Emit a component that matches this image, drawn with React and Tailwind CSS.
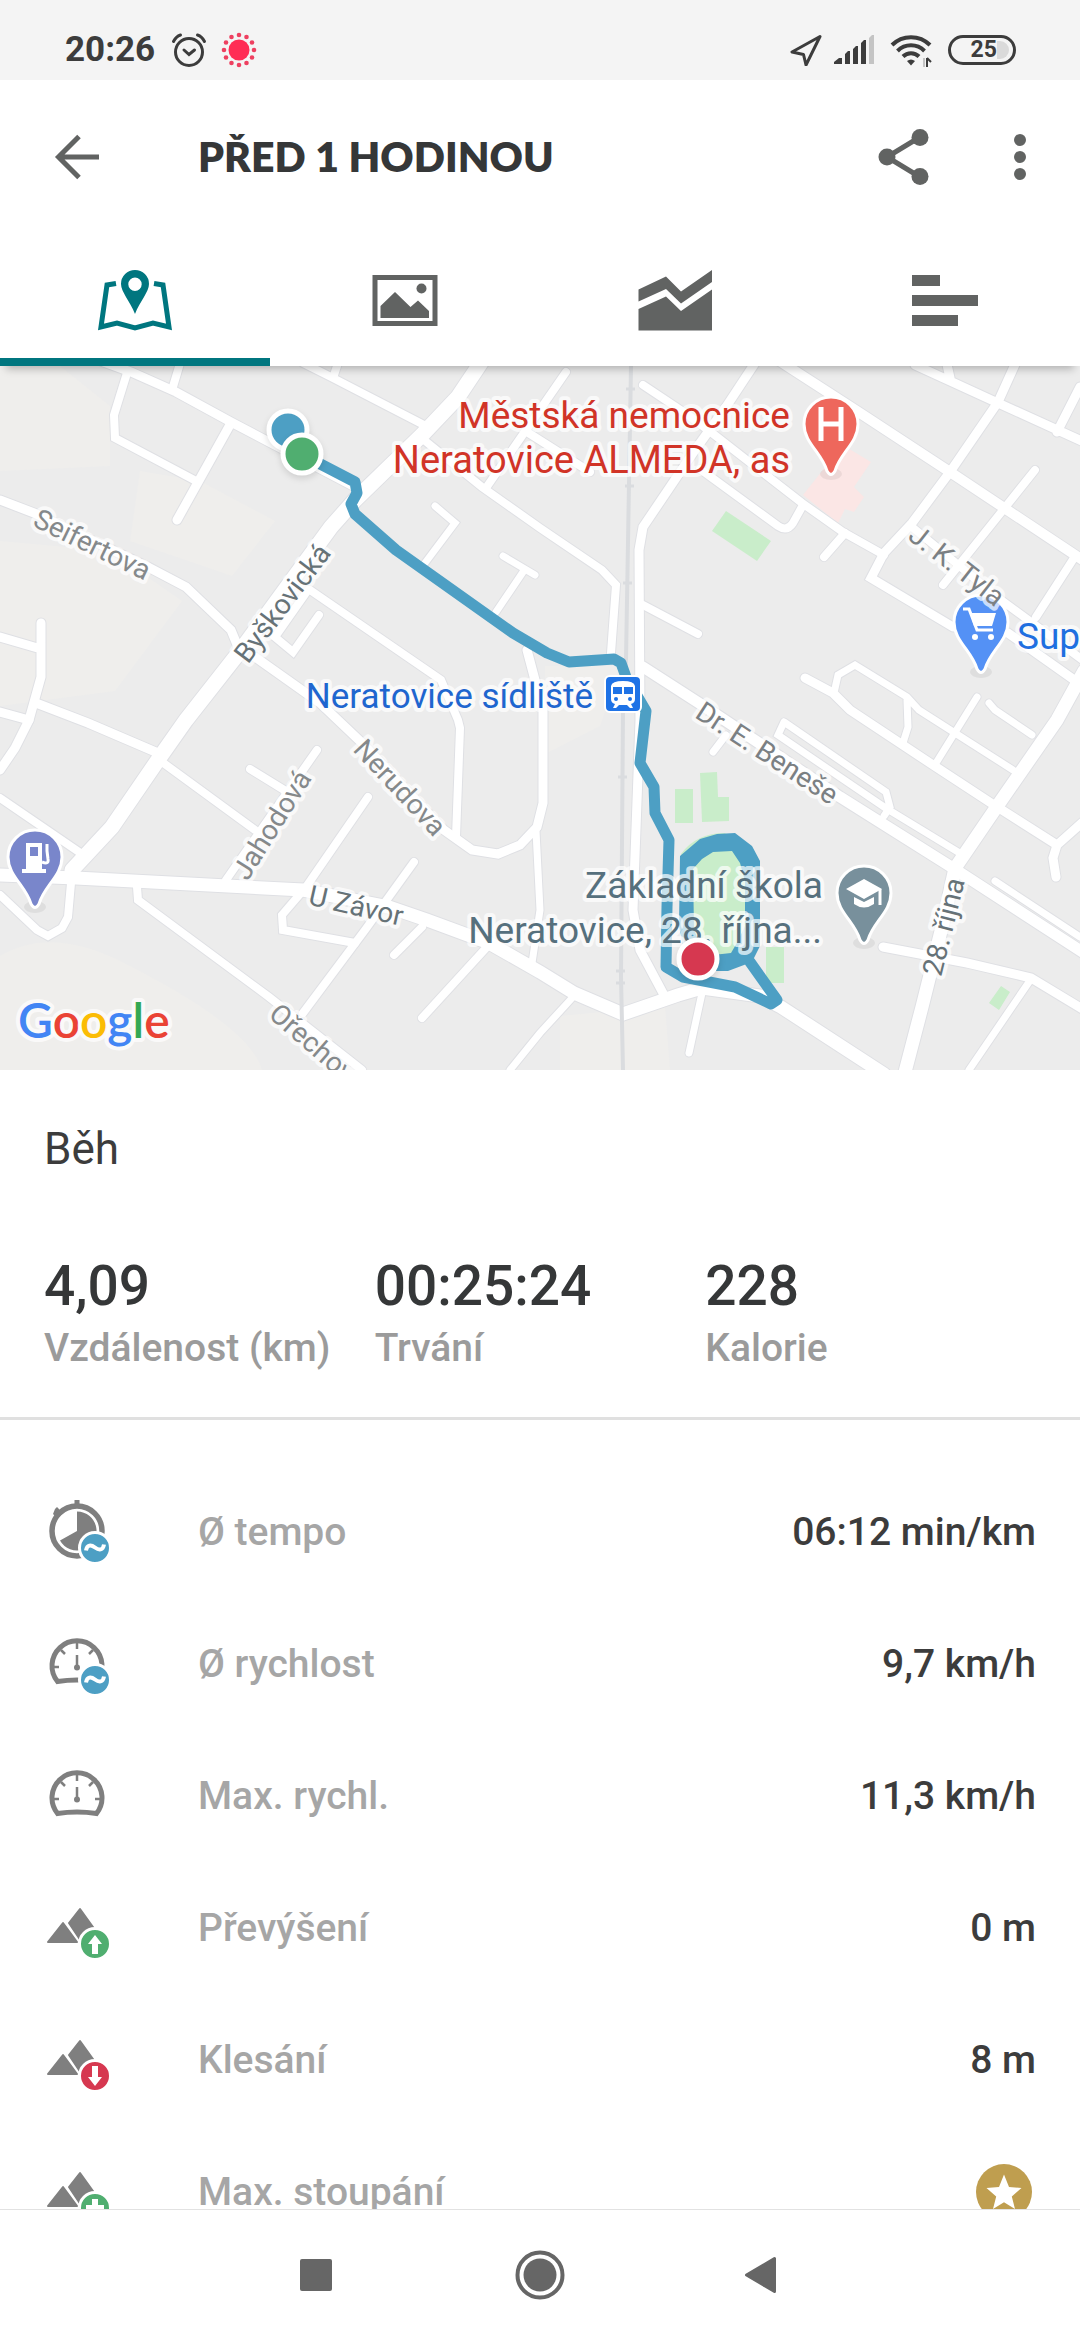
import React, { useState } from "react";

/* ---------- status bar ---------- */

const virusDots = Array.from({ length: 12 }, (_, i) => {
    const a = (i * Math.PI) / 6;
    return [18 + 15 * Math.cos(a), 18 + 15 * Math.sin(a)];
});

function StatusBar() {
    return (
        <div className="h-20 shrink-0 bg-[#f4f4f4] flex items-center justify-between pl-[65px] pr-16 pt-5 text-[#3c3c3c]">
            <div className="flex items-center">
                <span className="text-[35px] leading-[36px] font-bold">20:26</span>
                <svg className="w-9 h-9 ml-4" viewBox="0 0 36 36" fill="none" stroke="currentColor" strokeWidth="3" strokeLinecap="round">
                    <circle cx="18" cy="20" r="13.5" />
                    <path d="M13 18l5 4.500 5.500-4.500M2.500 9.500C4 6.500 6.500 4 9.500 3M33.500 9.500C32 6.500 29.500 4 26.500 3" />
                </svg>
                <svg className="w-9 h-9 ml-[14px]" viewBox="0 0 36 36">
                    <circle cx="18" cy="18" r="10.500" fill="#ff2d55" />
                    {virusDots.map(([x, y], i) => (
                        <circle key={i} cx={x} cy={y} r="2.300" fill="#ee4060" />
                    ))}
                </svg>
            </div>
            <div className="flex items-center">
                <svg className="w-8 h-8" viewBox="0 0 32 32" fill="none" stroke="currentColor" strokeWidth="3" strokeLinejoin="round">
                    <path d="M30 2.500L2 18l11.500 2.500L16 31z" />
                </svg>
                <svg className="w-[42px] h-8 ml-3" viewBox="0 0 42 32" fill="currentColor">
                    <path d="M0 30v-2l5-4h3v6zM11 30V20l3-3h2v13zM19 30V15l3-3h2v18zM27 30V9l3-3h2v24z" />
                    <path d="M35 30V4l3-3h2v29z" fill="#c4c4c4" />
                </svg>
                <svg className="w-11 h-9 ml-[14px]" viewBox="0 0 44 36" fill="none" stroke="currentColor" strokeWidth="4">
                    <path d="M2 13a27 27 0 0 1 38 0M7.500 19a19 19 0 0 1 27 0M13 24.500a11.500 11.500 0 0 1 16 0" />
                    <path d="M17 29q4-3 8 0l-4 4.500z" fill="currentColor" stroke="none" />
                    <path d="M37 26v9M41 30l-4-4" strokeWidth="2" />
                    <path d="M34 35v-9" strokeWidth="2" stroke="#c4c4c4" />
                </svg>
                <div className="ml-[14px] w-[68px] h-[30px] rounded-full border-[3px] border-[#3c3c3c] flex items-center justify-end pr-1">
                    <span className="text-[23px] leading-[24px] font-bold">25</span>
                    <span className="w-3 h-[18px] rounded-r-full bg-[#dadada]" />
                </div>
            </div>
        </div>
    );
}

/* ---------- header and tabs ---------- */

function Header() {
    return (
        <header className="h-[154px] shrink-0 flex items-center pl-[54px] pr-[44px] text-[#616362]">
            <button type="button" aria-label="Zpět" className="w-12 h-12">
                <svg viewBox="0 0 48 48" fill="none" stroke="currentColor" strokeWidth="5">
                    <path d="M45 24H6M25 3.500L4.500 24 25 44.500" />
                </svg>
            </button>
            <h1 className="flex-1 ml-24 text-[41px] leading-[48px] font-extrabold text-[#353738] font-['Lato',sans-serif]">
                PŘED 1 HODINOU
            </h1>
            <button type="button" aria-label="Sdílet" className="w-14 h-14">
                <svg viewBox="0 0 56 56" fill="currentColor">
                    <path d="M44 8L11 28l33 20" fill="none" stroke="currentColor" strokeWidth="5" />
                    <circle cx="44" cy="8.500" r="8.500" />
                    <circle cx="11" cy="28" r="8.500" />
                    <circle cx="44" cy="47.500" r="8.500" />
                </svg>
            </button>
            <button type="button" aria-label="Další možnosti" className="w-8 h-14 ml-[72px]">
                <svg viewBox="0 0 32 56" fill="currentColor">
                    <circle cx="16" cy="11" r="6" />
                    <circle cx="16" cy="28" r="6" />
                    <circle cx="16" cy="45" r="6" />
                </svg>
            </button>
        </header>
    );
}

const tabs = [
    {
        id: "map",
        label: "Mapa",
        icon: (
            <>
                <path
                    d="M19 14.500L10 16 4 58l16-4 18 5 18-5 16 4L66 16 57 14.500"
                    fill="none"
                    stroke="currentColor"
                    strokeWidth="5"
                />
                <path
                    fillRule="evenodd"
                    d="M38 1a14 14 0 0 1 14 14c0 8-9 17-14 30-5-13-14-22-14-30A14 14 0 0 1 38 1zm0 7.500a6.700 6.700 0 1 0 0 13.400 6.700 6.700 0 0 0 0-13.400z"
                />
            </>
        ),
    },
    {
        id: "photos",
        label: "Fotky",
        icon: (
            <>
                <path d="M8 8.500h60v46H8z" fill="none" stroke="currentColor" strokeWidth="5" />
                <path d="M13.500 49V37L28 23l15.500 15 7.500-6.500L62 42v7z" />
                <circle cx="54.500" cy="19.500" r="5" />
            </>
        ),
    },
    {
        id: "charts",
        label: "Grafy",
        icon: (
            <path d="M1.500 20.500L29 7.500 44 22.500 75 1v12L44 34.500 29 20 1.500 32.500zM1.500 40L29 27.500 44 42 75 20.500V61.500H1.500z" />
        ),
    },
    {
        id: "laps",
        label: "Kola",
        icon: <path d="M5 6h28v11H5zM5 26h66v11H5zM5 46h46v11H5z" />,
    },
];

function Tabs() {
    const [active, setActive] = useState("map");
    return (
        <div role="tablist" className="relative z-10 h-[132px] shrink-0 grid grid-cols-4 bg-white shadow-[0_9px_8px_-6px_rgba(0,0,0,0.25)]">
            {tabs.map((tab) => (
                <button
                    key={tab.id}
                    type="button"
                    role="tab"
                    aria-label={tab.label}
                    aria-selected={active === tab.id}
                    onClick={() => setActive(tab.id)}
                    className={
                        active === tab.id
                            ? "flex justify-center pt-[35px] border-b-8 border-[#00767f] text-[#00767f]"
                            : "flex justify-center pt-[35px] border-b-8 border-transparent text-[#616362]"
                    }
                >
                    <svg className="w-[76px] h-[62px]" viewBox="0 0 76 62" fill="currentColor">
                        {tab.icon}
                    </svg>
                </button>
            ))}
        </div>
    );
}

/* ---------- map ---------- */

// [width, path]
const roads = [
    [8, "M127 7L114 49 115 72 198 116"],
    [9, "M231 57L177 154"],
    [8, "M181-6L172 24"],
    [9, "M98-6L131 6 176 26 231 56 269 76 355 121"],
    [8, "M303-3L331 11 424 59M339-6L334 9"],
    [9, "M0 134L34 147 148 201 186 221 231 264 238 281"],
    [9, "M41 257V311L29 354 15 382 0 404M0 271L41 283"],
    [9, "M36 337L88 357 158 387M0 346L29 354"],
    [8, "M310 224L441 314 458 354 460 362 456 471"],
    [8, "M308 224L275 271 293 286 319 249"],
    [9, "M255 291L320 337 341 357 362 377 444 464 472 484 498 488 520 479 537 461 543 437V344L527 284"],
    [7, "M536 465L540 544 532 597"],
    [8, "M0 432L79 486"],
    [8, "M162 396L255 464M317 384L226 514M250 403L289 427"],
    [8, "M368 431L306 521 282 549 283 564 355 577"],
    [8, "M414 496L365 564 303 647M422 561L394 589M486 582L422 652"],
    [8, "M137 521L138 534 269 631 362 704"],
    [8, "M71 517L68 551 62 562 48 570 37 564 0 529"],
    [7, "M510 704L540 667 573 631"],
    [8, "M424 74L482 121 540 162 602 204 616 219 611 287"],
    [8, "M566 6L486 122M527 66L590 106"],
    [7, "M435 140L455 157 425 197M503 190L535 209M523 206L496 246"],
    [9, "M757-6L726 41 695 84 643 161 639 184 640 354 633 544 640 584 664 629"],
    [8, "M643 19L688 49 712 67 802 137 843 166 884 189"],
    [8, "M700 103L778 160Q787 166 793 157L803 139M845 167L824 191"],
    [10, "M778-6L860 47 950 106 1084 195"],
    [9, "M915-1L998 37 1084 76M946-6L950 12M1080 21L1057 66"],
    [9, "M1017-6L998 36 950 106 912 157 884 187 871 212 953 261 1008 267 1080 318"],
    [8, "M1035 104L943 219M1074 192L1036 251M912 161L1001 234 1084 295"],
    [8, "M643 239L698 268"],
    [7, "M784 356L778 369 884 441 958 486M784 356L886 426 890 441 884 450"],
    [11, "M643 301L702 339 753 373 840 431 953 502 1084 587"],
    [9, "M805 312L833 327 850 344 933 399 991 437 1057 479 1053 492 1056 511M1084 455L1057 479"],
    [7, "M834 327L838 309 855 299 907 331 919 344 1013 404M907 334L908 361 903 377"],
    [7, "M977 331L936 397M989 337L995 344 1032 369M726 369L713 386"],
    [9, "M883 581L967 597 1031 612 1084 644"],
    [7, "M1029 616L969 704M995 515L1080 571M702 627L689 687"],
    [13, "M1084 305L1057 354 998 439 955 502 943 557 922 641 905 706"],
    [13, "M0 509L76 512 303 524 389 541 427 554 489 577 540 606 574 627 623 648 678 629 702 622 760 630 781 641 884 708"],
    [15, "M484-8L458 31 422 69 355 134 331 161 241 284 186 354 160 391 112 461 72 504"],
];

function Pin({ x, y, fill, children }) {
    return (
        <g transform={`translate(${x} ${y})`}>
            <ellipse cx="0" cy="50" rx="11" ry="6" fill="#000" opacity="0.06" />
            <path
                d="M0-27A27 27 0 0 1 27 0C27 19 9 29 4 47Q0 54-4 47C-9 29-27 19-27 0A27 27 0 0 1 0-27z"
                fill={fill}
                stroke="#fff"
                strokeWidth="3"
            />
            {children}
        </g>
    );
}

function Marker({ x, y, fill }) {
    return <circle className="drop-shadow-md" cx={x} cy={y} r="19" fill={fill} stroke="#fff" strokeWidth="5" />;
}

const streets = [
    { name: "Seifertova", x: 88, y: 187, angle: 26, fill: "#85898b" },
    { name: "Byškovická", x: 290, y: 243, angle: -53, fill: "#667277" },
    { name: "Jahodová", x: 280, y: 464, angle: -58, fill: "#85898b" },
    { name: "Nerudova", x: 393, y: 428, angle: 47, fill: "#85898b" },
    { name: "U Závor", x: 354, y: 549, angle: 13, fill: "#667277" },
    { name: "Ořechov", x: 306, y: 684, angle: 41, fill: "#85898b" },
    { name: "J. K. Tyla", x: 951, y: 207, angle: 38, fill: "#7b8083" },
    { name: "Dr. E. Beneše", x: 762, y: 395, angle: 33, fill: "#7b8083" },
    { name: "28. října", x: 953, y: 563, angle: -76, fill: "#667277" },
];

function RouteMap() {
    return (
        <svg
            className="block w-full h-[704px] shrink-0 bg-[#ececec] font-['Roboto',sans-serif]"
            viewBox="0 0 1080 704"
            preserveAspectRatio="xMidYMid slice"
            role="img"
            aria-label="Mapa trasy"
        >
            <g fill="#efeeec">
                <path d="M0 0H60L110 40V100L0 105zM140 105L200 115 275 155 232 210 130 175zM0 175L110 185 182 235 115 325 0 340z" />
                <path d="M0 590Q50 560 120 595 250 660 262 704H0zM545 300L620 300 600 360 545 388zM560 650L665 640 670 704H560z" />
            </g>
            <path
                d="M846 81L871 96 854 121 864 131 854 146 845 143 838 157 803 129 830 95z"
                fill="#fbe6e5"
            />
            <g fill="#c9edca">
                <path d="M726 145L771 175 757 195 712 165zM675 423h18v34h-18zM700 407L717 406 718 431H729V455L702 456z" />
                <path d="M766 581h18v36h-18zM1001 620L1010 626 999 644 989 637z" />
                <path d="M681 488Q696 467 725 467L755 500V570Q748 600 722 600 690 598 684 570z" />
            </g>
            <g fill="none" strokeLinecap="round">
                {roads.map(([w, d]) => (
                    <path key={d} d={d} stroke="#dfe0e4" strokeWidth={w + 2} />
                ))}
                {roads.map(([w, d]) => (
                    <path key={d} d={d} stroke="#fff" strokeWidth={w} />
                ))}
            </g>

            {/* railway */}
            <path d="M631 0L626 294 623 344 621 611 623 704" fill="none" stroke="#dadcdf" strokeWidth="4" />
            <path
                d="M626 23h9M625 120h9M623 217h9M618 411h9M617 507h9M616 605h9M616 617h9"
                stroke="#dadcdf"
                strokeWidth="3"
            />

            {/* recorded run, the stadium laps are one filled ring */}
            <path
                fill="none"
                stroke="#4d9fc4"
                strokeWidth="11"
                strokeLinejoin="round"
                strokeLinecap="round"
                d="M303 89L355 116 357 127 351 138 355 148 396 184 513 267 547 287 569 296 614 293 621 297 626 311 646 345 640 397 654 421 655 447 669 474 667 541 666 601 683 611 735 621 771 638 777 634 750 596"
            />
            <path
                fill="#4d9fc4"
                fillRule="evenodd"
                d="M680 490L700 473 717 468 735 467 752 480 760 495V580L752 596 728 605 702 605 684 585 679 560zM693 503L702 493 713 486 732 485 740 497 745 515V560L738 575 731 587 713 589 700 580 694 563z"
            />

            <Pin x={831} y={58} fill="#ee675c">
                <path d="M-10-17V17M10-17V17M-10 0H10" stroke="#fff" strokeWidth="5" />
            </Pin>
            <Pin x={981} y={256} fill="#5491f5">
                <path d="M-18-13h6l8 21H12" fill="none" stroke="#fff" strokeWidth="3" />
                <path d="M-11-9H15L11 4H-7z" fill="#fff" />
                <circle cx="-6" cy="15" r="3" fill="#fff" />
                <circle cx="10" cy="15" r="3" fill="#fff" />
            </Pin>
            <Pin x={35} y={491} fill="#7986cb">
                <path
                    fillRule="evenodd"
                    d="M-9-14H7V12h4v4h-24v-4h4zm4 4v9h8v-9z"
                    fill="#fff"
                />
                <path d="M7 5q7 3 6-3l-1-8v-7" fill="none" stroke="#fff" strokeWidth="3" />
            </Pin>
            <Pin x={864} y={527} fill="#78909c">
                <path d="M0-14L18-4 0 6-18-4zM-10 4v7q10 7 20 0V4L0 9z" fill="#fff" />
                <path d="M16-4V12" stroke="#fff" strokeWidth="3" />
            </Pin>
            <g transform="translate(605 310)">
                <rect width="36" height="36" rx="5" fill="#1f73e6" stroke="#fff" strokeWidth="2" />
                <path d="M6 10Q7 5 18 5t12 5v13q0 4-4 5l2 4h-3l-3-3h-8l-3 3H8l2-4q-4-1-4-5z" fill="#fff" />
                <path d="M8 11h9v7H8zM19 11h9v7h-9z" fill="#1f73e6" />
                <circle cx="11" cy="23" r="2" fill="#1f73e6" />
                <circle cx="25" cy="23" r="2" fill="#1f73e6" />
            </g>

            <g paintOrder="stroke" stroke="#fff" strokeOpacity="0.7" strokeWidth="8" strokeLinejoin="round">
                {streets.map((s) => (
                    <text
                        key={s.name}
                        transform={`translate(${s.x} ${s.y}) rotate(${s.angle})`}
                        textAnchor="middle"
                        fontSize="28"
                        fill={s.fill}
                    >
                        {s.name}
                    </text>
                ))}
                <g fontSize="37">
                    <text x="790" y="62" textAnchor="end" fill="#d13427">Městská nemocnice</text>
                    <text x="790" y="107" textAnchor="end" fontSize="38" fill="#d13427">Neratovice ALMEDA, as</text>
                    <text x="593" y="342" textAnchor="end" fontSize="35" fill="#1f66cf">Neratovice sídliště</text>
                    <text x="823" y="532" textAnchor="end" fill="#56707d">Základní škola</text>
                    <text x="822" y="577" textAnchor="end" fill="#56707d">Neratovice, 28. října...</text>
                    <text x="1017" y="283" fill="#1f6fe0">Sup</text>
                </g>
            </g>

            <Marker x={288} y={64} fill="#4d9fc4" />
            <Marker x={302} y={88} fill="#50ae70" />
            <Marker x={698} y={593} fill="#d63850" />

            <text
                className="font-['Lato',sans-serif] font-semibold"
                x="18"
                y="672"
                fontSize="48"
                paintOrder="stroke"
                stroke="#fff"
                strokeOpacity="0.7"
                strokeWidth="8"
                strokeLinejoin="round"
            >
                <tspan fill="#4285f4">G</tspan>
                <tspan fill="#ea4335">o</tspan>
                <tspan fill="#fbbc05">o</tspan>
                <tspan fill="#4285f4">g</tspan>
                <tspan fill="#34a853">l</tspan>
                <tspan fill="#ea4335">e</tspan>
            </text>
        </svg>
    );
}

/* ---------- workout summary ---------- */

const summary = [
    { value: "4,09", label: "Vzdálenost (km)" },
    { value: "00:25:24", label: "Trvání" },
    { value: "228", label: "Kalorie" },
];

function Summary() {
    return (
        <section className="px-11 pt-[53px] pb-[43px] border-b-[3px] border-[#e0e0e0] shrink-0">
            <h2 className="text-[44px] leading-[52px] text-[#3c3c3c]">Běh</h2>
            <dl className="mt-[79px] grid grid-cols-3">
                {summary.map((item) => (
                    <div key={item.label} className="flex flex-col-reverse gap-1">
                        <dt className="text-[39px] leading-[52px] font-medium text-[#9b9b9b] whitespace-nowrap">{item.label}</dt>
                        <dd className="text-[55px] leading-[64px] font-medium text-[#353738]">{item.value}</dd>
                    </div>
                ))}
            </dl>
        </section>
    );
}

/* ---------- detail rows ---------- */

function Badge({ fill, children }) {
    return (
        <>
            <circle cx="50" cy="48" r="15.500" fill={fill} stroke="#fff" strokeWidth="3" />
            {children}
        </>
    );
}

const Wave = () => (
    <Badge fill="#4d9fc4">
        <path d="M41 50.500c1-6 5-6 9-3s8 3 9-3" fill="none" stroke="#fff" strokeWidth="4" />
    </Badge>
);

const Stopwatch = () => (
    <>
        <circle cx="32" cy="31" r="25" fill="none" stroke="currentColor" strokeWidth="5.500" />
        <path d="M29.500 0h5v6h-5zM10 9l2-2 3 3 2 4-6 5-1-3-2-2z" />
        <path d="M32 31V11.500a19.500 19.500 0 1 1-17 29z" />
    </>
);

const Gauge = () => (
    <>
        <path
            d="M12.500 49.500A25 25 0 1 1 51.500 49.500Q32 46.500 12.500 49.500z"
            fill="none"
            stroke="currentColor"
            strokeWidth="5"
        />
        <path
            d="M32 10v7M32 23v12M9 35h5M50 35h5M16 18l4 4M48 18l-4 4"
            fill="none"
            stroke="currentColor"
            strokeWidth="2.500"
        />
        <circle cx="32" cy="35.500" r="3" />
    </>
);

const Mountains = () => (
    <path
        d="M3 46L18 27 32 46zM24 27L35 13 58 45 36 45z"
        stroke="currentColor"
        strokeWidth="2"
        strokeLinejoin="round"
    />
);

const rows = [
    { label: "Ø tempo", value: "06:12 min/km", icon: <><Stopwatch /><Wave /></> },
    { label: "Ø rychlost", value: "9,7 km/h", icon: <><Gauge /><Wave /></> },
    { label: "Max. rychl.", value: "11,3 km/h", icon: <Gauge /> },
    {
        label: "Převýšení",
        value: "0 m",
        icon: (
            <>
                <Mountains />
                <Badge fill="#50ae70">
                    <path d="M50 39l7 9h-4v10h-6V48h-4z" fill="#fff" />
                </Badge>
            </>
        ),
    },
    {
        label: "Klesání",
        value: "8 m",
        icon: (
            <>
                <Mountains />
                <Badge fill="#d63850">
                    <path d="M50 58l7-9h-4V38h-6v11h-4z" fill="#fff" />
                </Badge>
            </>
        ),
    },
    {
        label: "Max. stoupání",
        premium: true,
        icon: (
            <>
                <Mountains />
                <Badge fill="#50ae70">
                    <path d="M47 39h6v6h6v6h-6v6h-6v-6h-6v-6h6z" fill="#fff" />
                </Badge>
            </>
        ),
    },
];

function Details() {
    return (
        <dl className="pt-[46px] shrink-0">
            {rows.map((row) => (
                <div key={row.label} className="h-[132px] flex items-center pl-[45px] pr-11 text-[39px] leading-[52px] font-medium">
                    <dt className="flex-1 flex items-center text-[#a6a6a6]">
                        <svg className="w-[68px] h-[64px] mr-[85px] text-[#7f7f7f] overflow-visible" viewBox="0 0 68 64" fill="currentColor">
                            {row.icon}
                        </svg>
                        {row.label}
                    </dt>
                    <dd className="text-[#3c3c3c]">
                        {row.premium ? (
                            <svg className="w-14 h-14 mr-1" viewBox="0 0 56 56" role="img" aria-label="Premium">
                                <circle cx="28" cy="28" r="28" fill="#bf9e4f" />
                                <path d="M28 10.500l5 12.500 12.500 1-9.700 8.500L39 45l-11-6.700L17 45l3.200-12.500L10.500 24 23 23z" fill="#fff" />
                            </svg>
                        ) : (
                            row.value
                        )}
                    </dd>
                </div>
            ))}
        </dl>
    );
}

/* ---------- android navigation ---------- */

function NavBar() {
    return (
        <nav className="h-[131px] shrink-0 border-t border-[#e2e2e2] bg-white flex items-center justify-center gap-[158px] text-[#666666]">
            <button type="button" aria-label="Poslední aplikace" className="w-16 h-16">
                <svg viewBox="0 0 64 64" fill="currentColor">
                    <rect x="14" y="16" width="32" height="32" rx="2" />
                </svg>
            </button>
            <button type="button" aria-label="Domů" className="w-16 h-16">
                <svg viewBox="0 0 64 64" fill="currentColor">
                    <circle cx="32" cy="32" r="22.500" fill="none" stroke="currentColor" strokeWidth="4" />
                    <circle cx="32" cy="32" r="16.500" />
                </svg>
            </button>
            <button type="button" aria-label="Zpět" className="w-16 h-16">
                <svg viewBox="0 0 64 64" fill="currentColor" stroke="currentColor" strokeWidth="3" strokeLinejoin="round">
                    <path d="M44.500 15.500v33L16.500 32z" />
                </svg>
            </button>
        </nav>
    );
}

export default function App() {
    return (
        <div className="h-screen flex flex-col overflow-hidden bg-white font-['Roboto',sans-serif]">
            <StatusBar />
            <Header />
            <Tabs />
            <main className="flex-1 min-h-0 overflow-hidden flex flex-col">
                <RouteMap />
                <Summary />
                <Details />
            </main>
            <NavBar />
        </div>
    );
}
